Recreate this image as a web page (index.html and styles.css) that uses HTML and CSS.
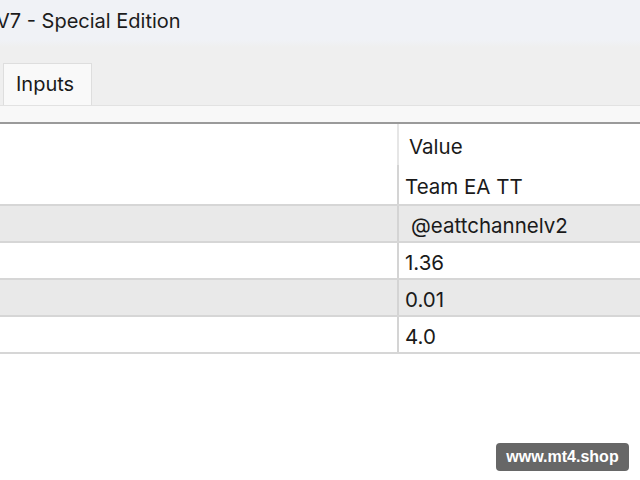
FILE: index.html
```html
<!DOCTYPE html>
<html>
<head>
<meta charset="utf-8">
<link rel="stylesheet" href="styles.css">
</head>
<body>
<div class="titlebar"><span class="title">V7 - Special Edition</span></div>
<div class="tabstrip">
  <div class="tab">Inputs</div>
</div>
<div class="tabfoot"></div>
<div class="table">
  <div class="row header"><div class="cell name"></div><div class="cell value v-head">Value</div></div>
  <div class="row first"><div class="cell name"></div><div class="cell value">Team EA TT</div></div>
  <div class="row alt"><div class="cell name"></div><div class="cell value v-indent">@eattchannelv2</div></div>
  <div class="row"><div class="cell name"></div><div class="cell value">1.36</div></div>
  <div class="row alt"><div class="cell name"></div><div class="cell value">0.01</div></div>
  <div class="row"><div class="cell name"></div><div class="cell value">4.0</div></div>
</div>
<div class="watermark">www.mt4.shop</div>
</body>
</html>
```
FILE: styles.css
```css
html, body {
  margin: 0;
  padding: 0;
  background: #ffffff;
  width: 640px;
  height: 480px;
  overflow: hidden;
  font-family: Inter, "Noto Sans", sans-serif;
  color: #1a1a1a;
  position: relative;
}
.titlebar {
  height: 47px;
  background: linear-gradient(#f0f2f6 0, #f0f2f6 40px, #efefef 47px);
  display: flex;
  align-items: center;
}
.title {
  font-size: 20px;
  margin-left: -4px;
  margin-top: -5px;
  color: #1c1c1c;
}
.tabstrip {
  height: 59px;
  background: #efefef;
  display: flex;
  align-items: flex-end;
  border-bottom: 1px solid #e2e2e2;
  box-sizing: border-box;
}
.tab {
  margin-left: 3px;
  width: 89px;
  height: 42px;
  box-sizing: border-box;
  background: #f9f9f9;
  border: 1px solid #dedede;
  border-bottom: none;
  font-size: 20px;
  padding: 8px 0 0 12px;
}
.tabfoot {
  height: 16px;
  background: #f8f8f8;
  border-bottom: 2px solid #9a9a9a;
}
.table {
  display: flex;
  flex-direction: column;
}
.row {
  display: grid;
  grid-template-columns: 397px 1fr;
  height: 35px;
  border-bottom: 2px solid #d6d6d6;
  background: #ffffff;
}
.row.alt { background: #e9e9e9; }
.row.header { height: 41px; border-bottom: none; }
.row.first { height: 39px; }
.cell {
  display: flex;
  align-items: center;
  font-size: 20.5px;
  padding-top: 3px;
  box-sizing: border-box;
}
.cell.value {
  border-left: 2px solid #d4d4d4;
  padding-left: 6px;
}
.v-head { padding-left: 10px !important; border-left-color: #e6e6e6 !important; }
.v-indent { padding-left: 12px !important; }
.watermark {
  position: absolute;
  left: 496px;
  top: 443px;
  width: 133px;
  height: 28px;
  background: #676767;
  border-radius: 4px;
  color: #ffffff;
  font-family: "Liberation Sans", Arial, sans-serif;
  font-weight: bold;
  font-size: 16px;
  display: flex;
  align-items: center;
  justify-content: center;
}
```
